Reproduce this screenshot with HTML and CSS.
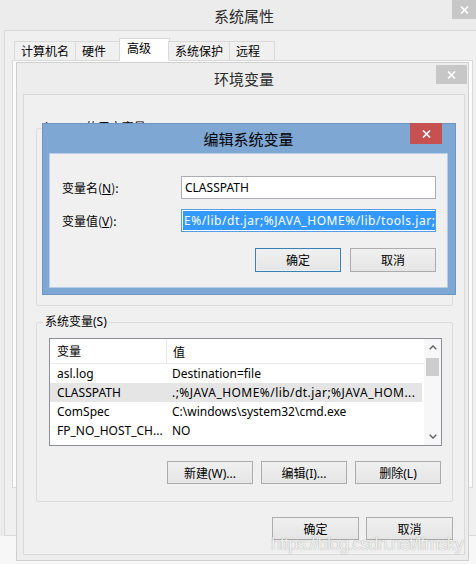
FILE: index.html
```html
<!DOCTYPE html>
<html>
<head>
  <meta charset="UTF-8">
  <title>编辑系统变量</title>
  <link rel="stylesheet" href="styles.css">
</head>
<body>
  <div class="desktop">

    <!-- 系统属性 (back window) -->
    <div class="window sys-props">
      <div class="titlebar">
        <span class="title">系统属性</span>
        <span class="close-btn">
          <svg width="9" height="8" viewBox="0 0 9 8"><path d="M1 0.5 L8 7.5 M8 0.5 L1 7.5" stroke="#fff" stroke-width="1.6"/></svg>
        </span>
      </div>
      <div class="client">
        <div class="tabs">
          <div class="tab">计算机名</div>
          <div class="tab">硬件</div>
          <div class="tab active">高级</div>
          <div class="tab">系统保护</div>
          <div class="tab">远程</div>
        </div>
        <div class="tab-panel"></div>
      </div>
    </div>

    <!-- 环境变量 -->
    <div class="window env-vars">
      <div class="titlebar">
        <span class="title">环境变量</span>
        <span class="close-btn">
          <svg width="9" height="8" viewBox="0 0 9 8"><path d="M1 0.5 L8 7.5 M8 0.5 L1 7.5" stroke="#fff" stroke-width="1.6"/></svg>
        </span>
      </div>
      <div class="client">
        <fieldset class="group user-group">
          <legend>lenovo 的用户变量(U)</legend>
        </fieldset>

        <fieldset class="group sys-group">
          <legend>系统变量(S)</legend>
          <div class="listview">
            <div class="list-body">
              <div class="list-header">
                <div class="col-name">变量</div>
                <div class="col-value">值</div>
              </div>
              <div class="list-row">
                <div class="col-name">asl.log</div>
                <div class="col-value">Destination=file</div>
              </div>
              <div class="list-row selected">
                <div class="col-name">CLASSPATH</div>
                <div class="col-value path">.;%JAVA_HOME%/lib/dt.jar;%JAVA_HOM...</div>
              </div>
              <div class="list-row">
                <div class="col-name">ComSpec</div>
                <div class="col-value">C:\windows\system32\cmd.exe</div>
              </div>
              <div class="list-row">
                <div class="col-name">FP_NO_HOST_CH...</div>
                <div class="col-value">NO</div>
              </div>
            </div>
            <div class="scrollbar">
              <div class="scroll-arrow">
                <svg width="8" height="5" viewBox="0 0 8 5"><path d="M0.7 4.3 L4 1 L7.3 4.3" fill="none" stroke="#606060" stroke-width="1.3"/></svg>
              </div>
              <div class="scroll-track">
                <div class="scroll-thumb"></div>
              </div>
              <div class="scroll-arrow">
                <svg width="8" height="5" viewBox="0 0 8 5"><path d="M0.7 0.7 L4 4 L7.3 0.7" fill="none" stroke="#606060" stroke-width="1.3"/></svg>
              </div>
            </div>
          </div>
          <div class="btn-row">
            <button class="btn">新建(W)...</button>
            <button class="btn">编辑(I)...</button>
            <button class="btn">删除(L)</button>
          </div>
        </fieldset>

        <div class="btn-row footer">
          <button class="btn wide">确定</button>
          <button class="btn wide">取消</button>
        </div>
      </div>
    </div>

    <!-- 编辑系统变量 (active dialog) -->
    <div class="window edit-var">
      <div class="titlebar">
        <span class="title">编辑系统变量</span>
        <span class="close-btn red">
          <svg width="9" height="8" viewBox="0 0 9 8"><path d="M1 0.5 L8 7.5 M8 0.5 L1 7.5" stroke="#fff" stroke-width="1.6"/></svg>
        </span>
      </div>
      <div class="client">
        <div class="form-row">
          <label class="field-label">变量名(<u>N</u>):</label>
          <div class="field">CLASSPATH</div>
        </div>
        <div class="form-row">
          <label class="field-label">变量值(<u>V</u>):</label>
          <div class="field focused">
            <span class="selection">E%/lib/dt.jar;%JAVA_HOME%/lib/tools.jar;</span>
          </div>
        </div>
        <div class="btn-row dialog-buttons">
          <button class="btn default">确定</button>
          <button class="btn">取消</button>
        </div>
      </div>
    </div>

    <div class="watermark">https://blog.csdn.net/lfmsky</div>
  </div>
</body>
</html>
```

FILE: styles.css
```css
body {
  margin: 0;
  font-family: "Noto Sans", "Noto Sans CJK SC", sans-serif;
  font-size: 12px;
  color: #000;
  background: #f7f7f7;
}
.desktop {
  position: relative;
  width: 476px;
  height: 564px;
  overflow: hidden;
}

/* generic window frame */
.window {
  position: absolute;
  display: flex;
  flex-direction: column;
  box-sizing: border-box;
}
.titlebar {
  position: relative;
  flex: none;
  display: flex;
  align-items: center;
  justify-content: center;
}
.title {
  font-size: 15px;
  font-family: "Noto Sans CJK SC", sans-serif;
  color: #2b2b2b;
}
.close-btn {
  position: absolute;
  display: flex;
  align-items: center;
  justify-content: center;
  background: #c7c7c7;
}
.close-btn.red {
  background: #c75050;
}

/* 系统属性 */
.sys-props {
  left: 0;
  top: 0;
  width: 482px;
  height: 536px;
  background: #ececec;
}
.sys-props .titlebar {
  height: 30px;
  padding-left: 6px;
}
.sys-props .close-btn {
  top: 0;
  right: 6px;
  width: 24px;
  height: 19px;
}
.sys-props .client {
  flex: 1;
  margin-left: 4px;
  border-left: 1px solid #dadada;
  border-top: 1px solid #dadada;
  border-bottom: 1px solid #dadada;
  background: #f0f0f0;
  padding: 7px 0 0 7px;
  display: flex;
  flex-direction: column;
}
.tabs {
  display: flex;
  align-items: flex-end;
  height: 22px;
  margin-left: 2px;
  position: relative;
  z-index: 1;
}
.tab {
  box-sizing: border-box;
  height: 19px;
  min-width: 46px;
  padding: 0 6px;
  border: 1px solid #d9d9d9;
  border-bottom: none;
  margin-left: -1px;
  background: #f0f0f0;
  line-height: 18px;
  font-family: "Noto Sans CJK SC", sans-serif;
}
.tab:first-child {
  margin-left: 0;
}
.tab.active {
  height: 23px;
  margin: 0 -1px -1px -2px;
  padding: 0 7px;
  min-width: 51px;
  background: #fff;
  line-height: 18px;
}
.tab-panel {
  width: 461px;
  height: 428px;
  box-sizing: border-box;
  border: 1px solid #d9d9d9;
  background: #fbfbfb;
}

/* 环境变量 */
.env-vars {
  left: 16px;
  top: 62px;
  width: 453px;
  height: 499px;
  border: 1px solid #d0d0d0;
  background: #ededed;
  padding: 0 3px 5px 6px;
}
.env-vars .titlebar {
  height: 31px;
}
.env-vars .close-btn {
  top: 2px;
  right: -2px;
  width: 31px;
  height: 19px;
}
.env-vars .client {
  flex: 1;
  border: 1px solid #dadada;
  background: #f0f0f0;
  display: flex;
  flex-direction: column;
}

.group {
  box-sizing: border-box;
  margin: 0 11px 0 12px;
  padding: 8px 10px 17px 12px;
  border: 1px solid #dcdcdc;
  border-radius: 2px;
  min-width: 0;
}
.group legend {
  margin-left: -6px;
  padding: 0 2px;
  line-height: 16px;
  font-family: "Noto Sans", "Noto Sans CJK SC", sans-serif;
}
.user-group {
  margin-top: 25px;
  height: 186px;
}
.sys-group {
  margin-top: 8px;
}

.listview {
  display: flex;
  height: 108px;
  box-sizing: border-box;
  border: 1px solid #8c8f94;
  background: #fff;
}
.list-body {
  flex: 1;
  overflow: hidden;
}
.list-header,
.list-row {
  display: flex;
  align-items: center;
}
.list-header {
  height: 24px;
  border-bottom: 1px solid #eaeaea;
  font-family: "Noto Sans CJK SC", sans-serif;
}
.list-header .col-name {
  border-right: 1px solid #eaeaea;
  height: 24px;
  line-height: 24px;
}
.list-row {
  height: 19px;
  margin-right: 2px;
}
.list-row.selected {
  background: #e5e5e5;
}
.col-name {
  flex: none;
  width: 109px;
  padding-left: 7px;
  white-space: nowrap;
}
.col-value {
  padding-left: 6px;
  white-space: nowrap;
}
.col-value.path {
  letter-spacing: 0.45px;
}
.scrollbar {
  flex: none;
  width: 17px;
  display: flex;
  flex-direction: column;
  background: #f7f7f7;
}
.scroll-arrow {
  height: 17px;
  display: flex;
  align-items: center;
  justify-content: center;
}
.scroll-track {
  flex: 1;
  padding: 2px 2px 0 2px;
}
.scroll-thumb {
  height: 18px;
  background: #cdcdcd;
}

.btn-row {
  display: flex;
  justify-content: flex-end;
  gap: 8px;
  margin-top: 15px;
  padding-right: 1px;
}
.btn {
  box-sizing: border-box;
  width: 86px;
  height: 23px;
  padding: 0;
  border: 1px solid #acacac;
  background: linear-gradient(#f0f0f0, #e5e5e5);
  font-family: "Noto Sans", "Noto Sans CJK SC", sans-serif;
  font-size: 12px;
  color: #000;
}
.btn.wide {
  width: 87px;
}
.btn.default {
  border-color: #3c7fb1;
  box-shadow: inset 0 0 0 1px #e5f1fb;
}
.footer {
  margin-top: 15px;
  margin-right: 11px;
  padding-right: 0;
  gap: 7px;
}

/* 编辑系统变量 */
.edit-var {
  left: 42px;
  top: 123px;
  width: 414px;
  height: 172px;
  border: 1px solid #6d95c2;
  background: #7ea7d3;
  padding: 0 7px 6px 6px;
}
.edit-var .titlebar {
  height: 29px;
}
.edit-var .title {
  color: #000;
}
.edit-var .close-btn {
  top: -1px;
  right: 6px;
  width: 32px;
  height: 21px;
}
.edit-var .client {
  flex: 1;
  border: 1px solid #b5cde6;
  background: #f0f0f0;
  padding: 22px 11px 0 12px;
  display: flex;
  flex-direction: column;
}
.form-row {
  display: flex;
  align-items: center;
  margin-bottom: 10px;
}
.field-label {
  width: 119px;
  flex: none;
  font-family: "Noto Sans CJK SC", sans-serif;
}
.field-label u {
  font-family: "Noto Sans", sans-serif;
}
.field {
  box-sizing: border-box;
  width: 255px;
  height: 23px;
  border: 1px solid #abadb3;
  background: #fff;
  padding: 0 3px;
  display: flex;
  align-items: center;
  overflow: hidden;
  white-space: nowrap;
}
.field.focused {
  border-color: #569de5;
  padding: 0 1px;
}
.selection {
  background: #3399ff;
  color: #fff;
  line-height: 19px;
  letter-spacing: 0.55px;
  padding-left: 1px;
  flex: none;
}
.dialog-buttons {
  margin-top: 6px;
  gap: 9px;
  padding-right: 0;
}
.dialog-buttons .btn {
  height: 24px;
}

.watermark {
  position: absolute;
  left: 271px;
  top: 534px;
  font-family: "Liberation Sans", sans-serif;
  font-size: 18px;
  letter-spacing: -0.9px;
  color: rgba(255, 255, 255, 0.85);
  text-shadow: 0 0 1px rgba(0, 0, 0, 0.4);
  white-space: nowrap;
}
```
